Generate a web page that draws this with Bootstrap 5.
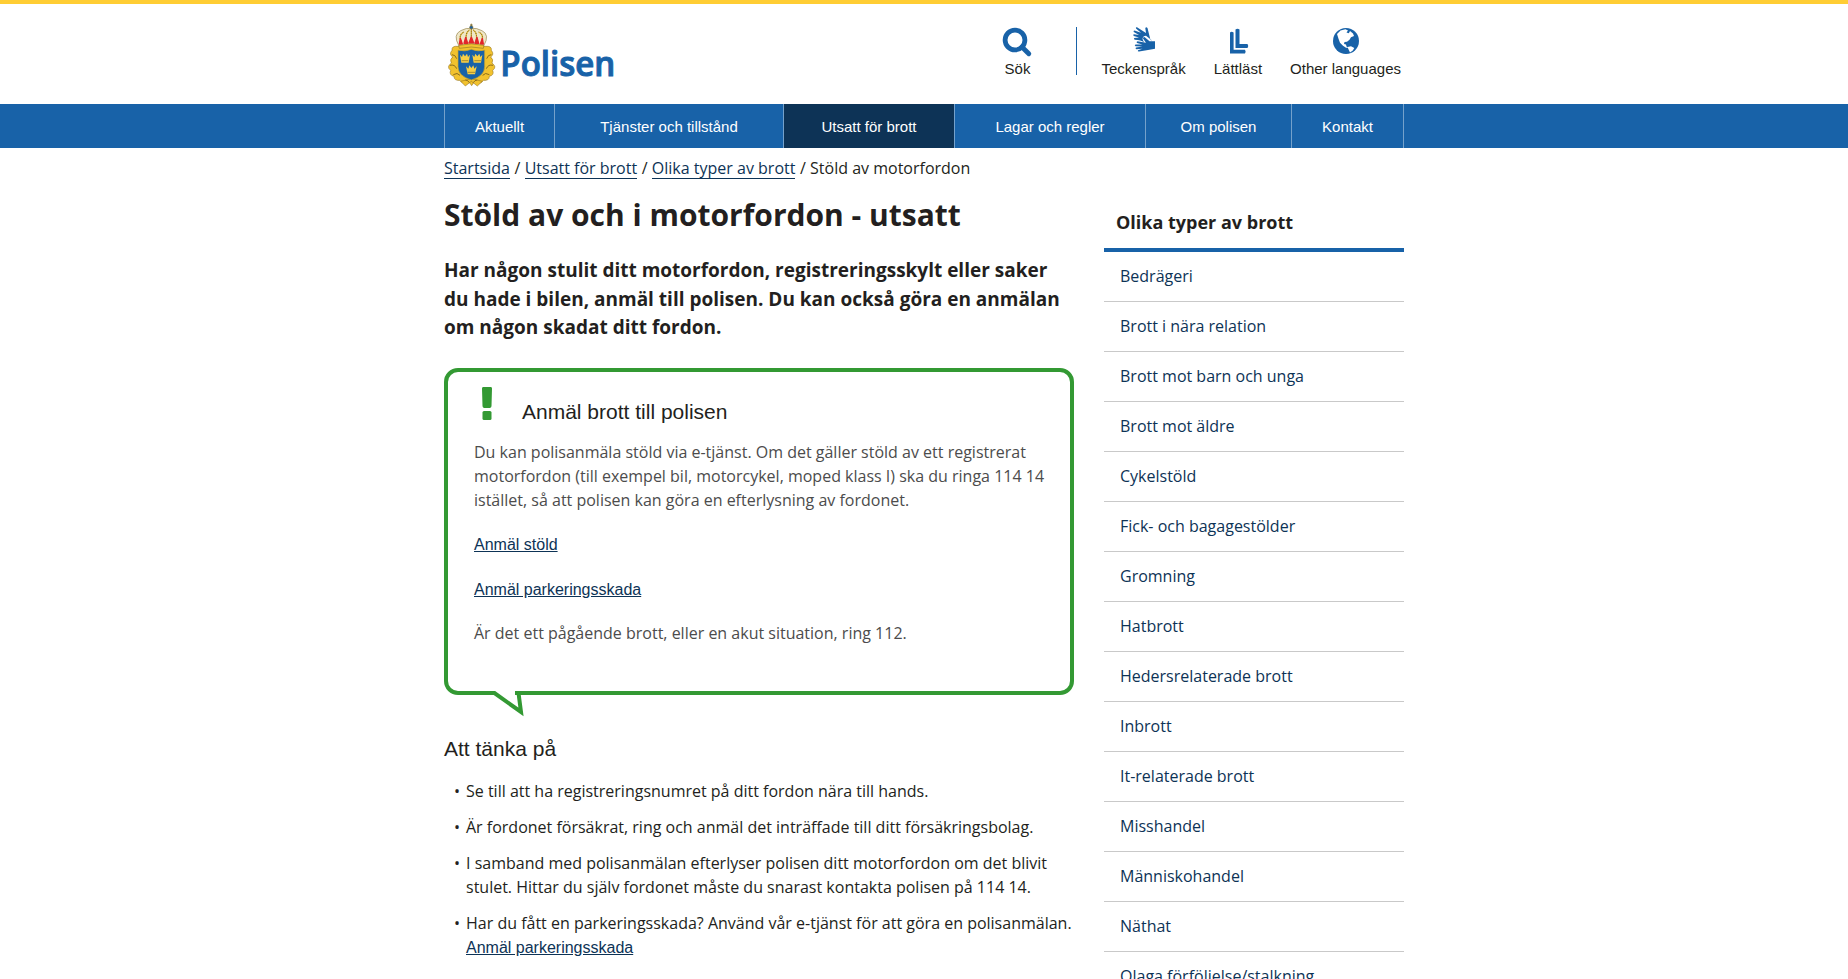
<!DOCTYPE html>
<html lang="sv">
<head>
<meta charset="utf-8">
<meta name="viewport" content="width=device-width, initial-scale=1">
<title>Stöld av och i motorfordon - utsatt | Polisen</title>
<link href="https://cdn.jsdelivr.net/npm/bootstrap@5.3.0/dist/css/bootstrap.min.css" rel="stylesheet">
<style>
  :root { --blue: #1862a8; --navy: #0d3356; --ink: #231f20; --green: #339933; }
  html, body { height: 100%; }
  body { font-family: "Open Sans", sans-serif; font-size: 16px; line-height: 24px; color: var(--ink); overflow: hidden; }
  .page-wrap { width: 960px; margin: 0 auto; }
  .arial { font-family: "Liberation Sans", Arial, sans-serif; }
  .site-header { border-top: 4px solid #ffcd34; height: 104px; }
  .brand-logo { display: block; margin-top: 18px; }
  .tools { margin-top: 21px; font-size: 15px; line-height: 18px; margin-right: 3px; }
  .tool-link { color: var(--ink); text-decoration: none; text-align: center; margin-left: 28px; }
  .tool-link svg { display: block; margin: 0 auto 1px; fill: var(--blue); width: 34px; height: 34px; }
  .tool-sep { width: 1px; height: 48px; border-left: 1px solid var(--blue); margin: 2px -4px 0 42px; }
  .main-nav { background: var(--blue); height: 44px; }
  .main-nav .nav-link { padding: 1px 0 0; width: 100%; line-height: 43px; font-size: 15px; color: #fff; text-align: center; }
  .main-nav .nav-item { border-left: 1px solid #74a1cb; }
  .main-nav .nav-item:last-child { border-right: 1px solid #74a1cb; }
  .w-a { width: 110px; } .w-b { width: 229px; } .w-c { width: 171px; } .w-d { width: 191px; } .w-e { width: 146px; } .w-f { width: 113px; }
  .main-nav .current { background: var(--navy); }
  .crumbs { padding-top: 8px; line-height: 24px; height: 44px; white-space: pre; }
  .crumbs a { color: var(--navy); text-decoration: none; display: inline-block; line-height: 20px; border-bottom: 1px solid var(--navy); margin-right: .5px; }
  .main-col { width: 630px; }
  h1 { font-size: 30px; line-height: 42px; font-weight: 700; margin: 2px 0 20px; }
  .intro { font-size: 19px; line-height: 28.5px; font-weight: 700; margin: 0 0 26.5px; }
  .callout { position: relative; height: 327px; border: 4px solid var(--green); border-radius: 14px; padding: 14px 20px 0 26px; color: #4c4c4c; }
  .callout-tail { position: absolute; left: 42px; bottom: -26px; }
  .callout-mark { margin-left: 7px; margin-top: 1px; }
  h2 { font-size: 21px; line-height: 26px; font-weight: 400; color: var(--ink); margin: 0; }
  .callout h2 { margin: 13px 0 0 29px; }
  .callout-head { margin-bottom: 15px; }
  .callout p { margin: 0 0 20px; }
  .callout p:nth-last-of-type(2) { margin-bottom: 19px; }
  .tips-title { margin-top: 41px; }
  .text-link { color: var(--navy); text-decoration: underline; }
  .tips { list-style: none; margin: 17px 0 0; padding: 0 0 0 22px; width: 632px; }
  .tips li { margin-bottom: 12px; position: relative; }
  .tips li::before { content: "•"; position: absolute; left: -12px; }
  .side-col { width: 300px; }
  .side-title { font-size: 18px; font-weight: 700; line-height: 24px; padding: 18px 0 14px 12px; border-bottom: 4px solid var(--blue); margin: 0; }
  .side-menu .list-group-item { padding: 12px 16px 13px; height: 50px; border-color: #c9c9c9; color: var(--navy); background: none; }
</style>
</head>
<body>
<header class="site-header">
  <div class="page-wrap d-flex justify-content-between align-items-start">
    <svg class="brand-logo" width="180" height="68" viewBox="24 66 540 204">
      <g fill="#f2c22e" stroke="#8a6c1c" stroke-width="1.6">
        <path d="M66 139q-20-2-18 12q-10 12 2 20q-10 8-4 18q-16 12-2 22q-6 14 10 18q0 14 18 12q8 14 28 6l7 10 7-10q20 8 28-6q18 2 18-12q16-4 10-18q14-10-2-22q6-10-4-18q12-8 2-20q2-14-18-12z"/>
        <path d="M74 244l14 14 18-14 18 14 15-14-32-8z"/>
        <path d="M48 164q10 0 14 12M42 196q14-4 20 10M52 224q12-8 20 2M166 164q-10 0-14 12M171 196q-14-4-20 10M160 224q-12-8-20 2M88 240q8 0 12 8M124 240q-8 0-12 8" fill="none" stroke-width="3"/>
      </g>
      <g stroke="#7d6724" stroke-width="1.6">
        <path d="M68 136Q50 104 74 92Q92 82 106 86Q120 82 138 92Q162 104 144 136z" fill="#efe7c8"/>
        <path d="M76 128Q66 104 84 96M92 126Q86 100 100 90M120 126Q126 100 112 90M136 128Q146 104 128 96M106 88V126" fill="none" stroke="#e5bd3a" stroke-width="4"/>
        <path d="M76 128Q66 104 84 96M92 126Q86 100 100 90M120 126Q126 100 112 90M136 128Q146 104 128 96M106 88V126" fill="none" stroke="#4d3f18" stroke-width="2.4" stroke-dasharray="3 3"/>
        <path d="M70 132l3-17 6 17zM84 130l5-18 6 18zM99 129l7-18 7 18zM117 130l6-18 5 18zM133 132l6-17 3 17z" fill="#e3262b" stroke="#e3262b" stroke-width="4" stroke-linejoin="round"/>
        <path d="M68 136q38-9 76 0l-2 9q-36-8-72 0z" fill="#f2c22e"/>
        <circle cx="106" cy="82" r="5" fill="#1862a8"/><path d="M106 71v8M102 75h8" stroke-width="2.5"/>
      </g>
      <path d="M66 150q20 6 40-2q20 8 40 2v50q0 28-40 40q-40-12-40-40z" fill="#1862a8" stroke="#d7aa26" stroke-width="2"/>
      <g fill="#f7cf45">
        <path d="M72 164l6 7 3-10 6 8 6-8 3 10 6-7-4 24H76z"/>
        <path d="M109 164l6 7 3-10 6 8 6-8 3 10 6-7-4 24h-22z"/>
        <path d="M90 199l7 7 3-10 6 8 6-8 3 10 7-7-5 24H95z"/>
      </g>
      <path d="M77 182h20M115 182h20M95 217h22" stroke="#806a28" stroke-width="2"/>
      <text x="193" y="229" font-family="Open Sans, sans-serif" font-weight="600" font-size="103" fill="#1862a8" stroke="#1862a8" stroke-width="3" textLength="345" lengthAdjust="spacingAndGlyphs">Polisen</text>
    </svg>
    <nav class="tools arial d-flex">
      <a class="tool-link" href="#"><svg viewBox="0 0 34 34"><circle cx="15" cy="15" r="9.900" fill="none" stroke="#1862a8" stroke-width="4.800"/><path d="M22 22l6.800 6.800" stroke="#1862a8" stroke-width="4.800" stroke-linecap="round"/></svg>Sök</a>
      <span class="tool-sep"></span>
      <a class="tool-link" href="#"><svg viewBox="0 0 34 34"><path d="M23.500 15L20.500 3Q19 1.500 18.300 3.200L19 8 10 2.300Q8.500 2 9 3.600L14 7.800 7.500 5.400Q6 5.600 6.800 7L12 10 6.800 9.200Q5.600 9.800 6.800 11L12 12.500 7.200 13Q6.500 14 7.800 14.800Q14 15 17 17.500L15.500 14Q16 10.700 19 10.700L25 15.500z"/><path d="M28 16.200H22.500L17.500 12Q15.700 12 16 13.500L19 17.700 10.500 16.300Q8.800 16.800 10 18L15.500 19.500 8.500 19.500Q7 20.200 8.500 21.300L15.500 21.500 9 22.600Q7.800 23.500 9.300 24.200L15.500 23.800 11 25.200Q10.200 26.300 12 26.600L21 25 28 23.700z"/></svg>Teckenspråk</a>
      <a class="tool-link" href="#"><svg viewBox="0 0 34 34"><path d="M14.500 4.500q2-1.500 4 0V19h8q1.500 2 0 4h-12zM9 7.500q1.500-1.300 3.600 0V24.800H24q1.300 2 0 3.800H9z"/></svg>Lättläst</a>
      <a class="tool-link" href="#"><svg viewBox="0 0 34 34"><circle cx="17" cy="16" r="13"/><path fill="#fff" d="M8 9l3.500-3.500 5-1.300 2.500 1.300-1.500 2 2.300.7L21 6l3 2.500L25 11l-3 1.300-1.500 2.500-2.500 2-2.500.2-.5 2 2 .5.5 2 1.500 1-2 .2-3-2-3-3-1.500-4zM18.500 22l3.500-.8 3.300 1.800-1.500 2.500-2.800 2-1.200-2.500z"/></svg>Other languages</a>
    </nav>
  </div>
</header>
<nav class="main-nav arial">
  <ul class="nav page-wrap flex-nowrap">
    <li class="nav-item w-a"><a class="nav-link" href="#">Aktuellt</a></li>
    <li class="nav-item w-b"><a class="nav-link" href="#">Tjänster och tillstånd</a></li>
    <li class="nav-item w-c current"><a class="nav-link" href="#">Utsatt för brott</a></li>
    <li class="nav-item w-d"><a class="nav-link" href="#">Lagar och regler</a></li>
    <li class="nav-item w-e"><a class="nav-link" href="#">Om polisen</a></li>
    <li class="nav-item w-f"><a class="nav-link" href="#">Kontakt</a></li>
  </ul>
</nav>
<div class="page-wrap">
  <div class="crumbs"><a href="#">Startsida</a> / <a href="#">Utsatt för brott</a> / <a href="#">Olika typer av brott</a> / Stöld av motorfordon</div>
  <div class="d-flex justify-content-between align-items-start">
    <main class="main-col">
      <h1>Stöld av och i motorfordon - utsatt</h1>
      <p class="intro">Har någon stulit ditt motorfordon, registreringsskylt eller saker<br>du hade i bilen, anmäl till polisen. Du kan också göra en anmälan<br>om någon skadat ditt fordon.</p>
      <section class="callout">
        <div class="callout-head d-flex align-items-start">
          <svg class="callout-mark" width="12" height="34" viewBox="0 0 12 34" fill="#339933"><path d="M2 0h8q1 0 1 1.500L10.500 19q0 1.500-1.500 2H3q-1.500-.5-1.500-2L1 1.500Q1 0 2 0z"/><rect x="1.500" y="24" width="9" height="9" rx="1.500"/></svg>
          <h2 class="arial">Anmäl brott till polisen</h2>
        </div>
        <p>Du kan polisanmäla stöld via e-tjänst. Om det gäller stöld av ett registrerat<br>motorfordon (till exempel bil, motorcykel, moped klass I) ska du ringa 114 14<br>istället, så att polisen kan göra en efterlysning av fordonet.</p>
        <p><a class="text-link arial" href="#">Anmäl stöld</a></p>
        <p><a class="text-link arial" href="#">Anmäl parkeringsskada</a></p>
        <p>Är det ett pågående brott, eller en akut situation, ring 112.</p>
        <svg class="callout-tail" width="34" height="26" viewBox="0 0 34 26"><path d="M4.500 0H25V5H6z" fill="#fff"/><path d="M0 2H4.500L31 21 28.500 2H34" fill="none" stroke="#339933" stroke-width="4"/></svg>
      </section>
      <h2 class="arial tips-title">Att tänka på</h2>
      <ul class="tips">
        <li>Se till att ha registreringsnumret på ditt fordon nära till hands.</li>
        <li>Är fordonet försäkrat, ring och anmäl det inträffade till ditt försäkringsbolag.</li>
        <li>I samband med polisanmälan efterlyser polisen ditt motorfordon om det blivit<br>stulet. Hittar du själv fordonet måste du snarast kontakta polisen på 114 14.</li>
        <li>Har du fått en parkeringsskada? Använd vår e-tjänst för att göra en polisanmälan.<br><a class="text-link arial" href="#">Anmäl parkeringsskada</a></li>
      </ul>
    </main>
    <aside class="side-col">
      <h2 class="side-title">Olika typer av brott</h2>
      <div class="list-group list-group-flush side-menu">
        <a class="list-group-item" href="#">Bedrägeri</a>
        <a class="list-group-item" href="#">Brott i nära relation</a>
        <a class="list-group-item" href="#">Brott mot barn och unga</a>
        <a class="list-group-item" href="#">Brott mot äldre</a>
        <a class="list-group-item" href="#">Cykelstöld</a>
        <a class="list-group-item" href="#">Fick- och bagagestölder</a>
        <a class="list-group-item" href="#">Gromning</a>
        <a class="list-group-item" href="#">Hatbrott</a>
        <a class="list-group-item" href="#">Hedersrelaterade brott</a>
        <a class="list-group-item" href="#">Inbrott</a>
        <a class="list-group-item" href="#">It-relaterade brott</a>
        <a class="list-group-item" href="#">Misshandel</a>
        <a class="list-group-item" href="#">Människohandel</a>
        <a class="list-group-item" href="#">Näthat</a>
        <a class="list-group-item" href="#">Olaga förföljelse/stalkning</a>
      </div>
    </aside>
  </div>
</div>
<script src="https://cdn.jsdelivr.net/npm/bootstrap@5.3.0/dist/js/bootstrap.bundle.min.js"></script>
</body>
</html>
